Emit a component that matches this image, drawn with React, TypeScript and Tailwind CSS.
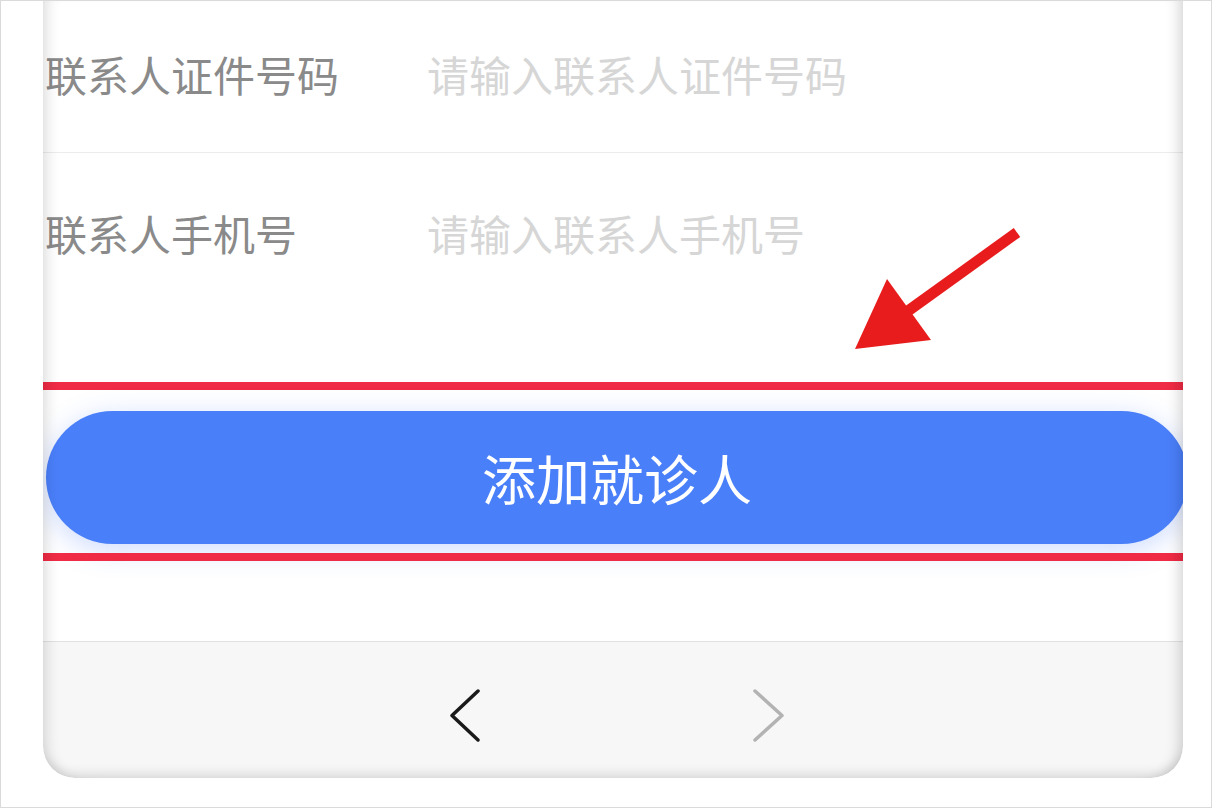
import React from 'react'

const font = { fontFamily: '"Noto Sans CJK SC", "Noto Sans", sans-serif' }

function FormRow({ label, placeholder, height }: { label: string; placeholder: string; height: string }) {
  return (
    <div className={`flex items-center pl-[2px] pb-[5px] ${height}`}>
      <span className="w-[382px] shrink-0 text-[42px] leading-none text-[#8a8a8a]">{label}</span>
      <span className="text-[42px] leading-none text-[#d6d6d6]">{placeholder}</span>
    </div>
  )
}

export default function App() {
  return (
    <div className="relative w-[1212px] h-[808px] overflow-hidden border border-[#dadada] bg-white pl-[42px]" style={font}>
      <div className="relative w-[1140px] h-[778px] -mt-px overflow-hidden rounded-b-[32px] bg-white">
        <FormRow label="联系人证件号码" placeholder="请输入联系人证件号码" height="h-[153px] border-b border-[#ececec]" />
        <FormRow label="联系人手机号" placeholder="请输入联系人手机号" height="h-[164px]" />

        <div className="mt-[65px] h-[8px] bg-[#f02b45]" />
        <div className="pt-[21px] pb-[9px]">
          <button className="ml-[3px] flex h-[133px] w-[1142px] items-center justify-center rounded-full bg-[#4a7ffa] text-[54px] leading-none text-white shadow-[0_6px_28px_rgba(74,127,250,0.28)]">
            添加就诊人
          </button>
        </div>
        <div className="h-[8px] bg-[#f02b45]" />
        <div className="h-[80px]" />

        <div className="flex h-[137px] items-center justify-center gap-[271px] border-t border-[#e2e2e2] bg-[#f7f7f7] pt-[12px] pl-[7px]">
          <svg width="32" height="54" viewBox="0 0 32 54" fill="none">
            <path d="M29 2 L3 26.5 L29 51" stroke="#1a1a1a" strokeWidth="3.5" strokeLinecap="round" strokeLinejoin="round" />
          </svg>
          <svg width="32" height="54" viewBox="0 0 32 54" fill="none">
            <path d="M3 2 L30 26.5 L3 51" stroke="#b3b3b3" strokeWidth="3.5" strokeLinecap="round" strokeLinejoin="round" />
          </svg>
        </div>

        {/* bezel shading over the screen edges */}
        <div className="pointer-events-none absolute inset-0 rounded-b-[32px] shadow-[inset_14px_0_14px_-10px_rgba(0,0,0,0.13),inset_-14px_0_14px_-10px_rgba(0,0,0,0.16),inset_0_-12px_12px_-8px_rgba(0,0,0,0.12)]" />
      </div>

      {/* annotation arrow */}
      <svg className="pointer-events-none absolute left-0 top-0" width="1212" height="808" viewBox="0 0 1212 808">
        <line x1="1016" y1="231.5" x2="900" y2="315" stroke="#e81c1c" strokeWidth="11" />
        <polygon points="854,348 886,278 930,339" fill="#e81c1c" />
      </svg>
    </div>
  )
}
